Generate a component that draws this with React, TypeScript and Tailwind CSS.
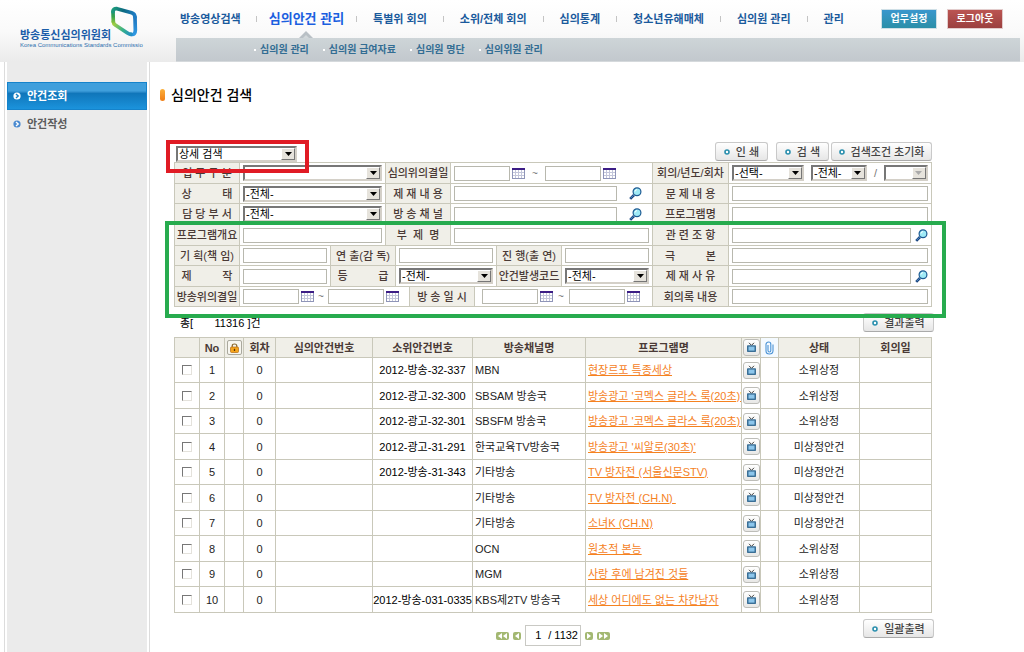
import { useId } from 'react';
import type { ReactNode } from 'react';

type Children = { children?: ReactNode };

function Logo() {
  return (
    <a href="#home" className="flex w-[176px] shrink-0 pl-5 pt-1" aria-label="방송통신심의위원회">
      <span className="flex flex-col pt-[25px] whitespace-nowrap">
        <span className="text-[11px] leading-3 font-bold text-[#1b5da9]">방송통신심의위원회</span>
        <span className="w-0 text-[6px] leading-2 text-[#2b6fae]">Korea Communications Standards Commissio</span>
      </span>
      <svg className="-ml-0.5" width="30" height="35" viewBox="322 10 90 105" fill="none" strokeLinejoin="round" strokeLinecap="round" strokeWidth="11">
        <defs>
          <linearGradient id="lg-top" gradientUnits="userSpaceOnUse" x1="335" x2="400" y1="24" y2="40">
            <stop offset="0" stopColor="#1c9a7c" />
            <stop offset="0.45" stopColor="#0d6a80" />
            <stop offset="1" stopColor="#1f7cc4" />
          </linearGradient>
          <linearGradient id="lg-left" gradientUnits="userSpaceOnUse" x1="335" x2="335" y1="24" y2="72">
            <stop offset="0" stopColor="#178a78" />
            <stop offset="0.5" stopColor="#36a34c" />
            <stop offset="1" stopColor="#a3cd3c" />
          </linearGradient>
          <linearGradient id="lg-bottom" gradientUnits="userSpaceOnUse" x1="335" x2="398" y1="68" y2="100">
            <stop offset="0" stopColor="#a8cf3e" />
            <stop offset="0.5" stopColor="#35b08c" />
            <stop offset="1" stopColor="#1f86d2" />
          </linearGradient>
          <linearGradient id="lg-right" gradientUnits="userSpaceOnUse" x1="400" x2="400" y1="42" y2="100">
            <stop offset="0" stopColor="#1b6fb8" />
            <stop offset="1" stopColor="#2f98e2" />
          </linearGradient>
        </defs>
        <path d="M400 50L401 88Q401 104 388 101" stroke="url(#lg-right)" />
        <path d="M388 101Q382 100 376 96L342 74Q335 69 335 63" stroke="url(#lg-bottom)" />
        <path d="M335 64L334 33" stroke="url(#lg-left)" />
        <path d="M334 33Q334 23 346 24L390 36Q400 39 400 50" stroke="url(#lg-top)" />
      </svg>
    </a>
  );
}

const NAV = ['방송영상검색', '심의안건 관리', '특별위 회의', '소위/전체 회의', '심의통계', '청소년유해매체', '심의원 관리', '관리'];
const SUBNAV = ['심의원 관리', '심의원 급여자료', '심의원 명단', '심의위원 관리'];

function Header() {
  return (
    <header className="flex h-[62px] bg-linear-to-b from-white via-[#fafafa] to-[#ebebeb] pr-1">
      <Logo />
      <div className="flex min-w-0 flex-1 flex-col">
        <div className="flex h-[38px] items-center justify-between pr-[17px]">
          <nav className="flex h-full items-center pl-1">
            {NAV.map((item, i) => (
              <div key={item} className="flex h-full items-center">
                {i > 0 && <span className="h-1.5 w-px bg-[#c4c4c4]" />}
                <a
                  href={`#nav-${i}`}
                  className={
                    i === 1
                      ? 'relative flex h-full items-center px-3 text-[13px] font-bold whitespace-nowrap text-[#1b5fe0]'
                      : `flex h-full items-center text-[11px] font-bold whitespace-nowrap text-[#1a5a9c] ${i === 0 ? 'pr-[15px]' : 'px-4'}`
                  }
                >
                  {item}
                  {i === 1 && (
                    <svg className="absolute bottom-0 left-1/2 -translate-x-1/2" width="14" height="7" viewBox="0 0 14 7">
                      <path d="M0 7L7 0L14 7Z" fill="#b9c0c5" />
                      <path d="M4 7L7 4L10 7Z" fill="#d2d7da" />
                    </svg>
                  )}
                </a>
              </div>
            ))}
          </nav>
          <div className="flex gap-2.5">
            <button className="h-5 w-14 border border-[#cfdfe6] bg-linear-to-b from-[#3a97cd] to-[#2b8fa8] text-[10px] leading-4 font-bold whitespace-nowrap text-white">업무설정</button>
            <button className="h-5 w-14 border border-[#e2cccc] bg-linear-to-b from-[#bb5552] to-[#9b403f] text-[10px] leading-4 font-bold whitespace-nowrap text-white">로그아웃</button>
          </div>
        </div>
        <nav className="flex h-6 items-center gap-3.5 border-b border-[#d5d9dc] bg-linear-to-b from-[#ced5d8] to-[#c2c8cd] pl-[78px]">
          {SUBNAV.map((item, i) => (
            <a key={item} href={`#sub-${i}`} className="flex items-center gap-1 text-[10px] font-bold whitespace-nowrap text-[#336d93]">
              <span className="size-0.5 bg-white" />
              {item}
            </a>
          ))}
        </nav>
      </div>
    </header>
  );
}

function Bullet({ disc, arrow }: { disc: string; arrow: string }) {
  return (
    <svg width="8" height="8" viewBox="0 0 8 8" className="shrink-0">
      <circle cx="4" cy="4" r="3.6" fill={disc} />
      <path d="M3 2L5.2 4L3 6" fill="none" stroke={arrow} strokeWidth="1.4" />
    </svg>
  );
}

function Sidebar() {
  return (
    <aside className="ml-1 w-[146px] shrink-0 border-x border-[#dcdcdc] bg-white px-0.5">
      <nav className="h-full bg-[#ebebeb] pt-5 text-[11px] font-bold">
        <a href="#list" className="flex h-7 items-center gap-1.5 border border-[#1583cb] bg-linear-to-b from-[#3f9fdc] from-30% via-[#1076ba] via-40% to-[#1b93dc] pl-[5px] text-white">
          <Bullet disc="#ffffff" arrow="#1680c4" />
          안건조회
        </a>
        <a href="#write" className="flex h-7 items-center gap-1.5 pl-1.5 text-[#5b5b5b]">
          <Bullet disc="#4a8ad0" arrow="#ffffff" />
          안건작성
        </a>
      </nav>
    </aside>
  );
}

function PushButton({ children, className = '' }: Children & { className?: string }) {
  return (
    <button className={`flex h-[19px] items-center justify-center gap-1.5 rounded-[3px] border border-[#c9c9c9] border-b-[#aaa] bg-linear-to-b from-white to-[#e6e6e6] text-[11px] leading-4 font-medium whitespace-nowrap text-[#444] ${className}`}>
      <svg width="6" height="6" viewBox="0 0 6 6">
        <circle cx="3" cy="3" r="2" fill="white" stroke="#2a8fae" strokeWidth="1.6" />
      </svg>
      {children}
    </button>
  );
}

function Select({ id, label, value, className = '', disabled }: { id?: string; label?: string; value: string; className?: string; disabled?: boolean }) {
  return (
    <span className={`relative block h-4 ${className}`}>
      <select
        id={id}
        aria-label={label}
        disabled={disabled}
        className="block h-4 w-full appearance-none border-2 border-[#d4d0c8] border-t-[#777] border-l-[#777] bg-white pr-3.5 pl-px text-[11px] leading-3 text-black"
      >
        <option>{value}</option>
      </select>
      <span className="pointer-events-none absolute top-0.5 right-0.5 flex h-3 w-3.5 items-center justify-center border border-white border-r-[#777] border-b-[#777] bg-[#e6e3dc]">
        <svg width="7" height="4" viewBox="0 0 7 4">
          <path d="M0 0H7L3.5 4Z" fill={disabled ? '#aaa' : '#000'} />
        </svg>
      </span>
    </span>
  );
}

function Box({ id, label, className = '' }: { id?: string; label?: string; className?: string }) {
  return <input id={id} aria-label={label} type="text" className={`block h-[15px] min-w-0 border border-[#b8b8ae] bg-white px-1 text-[11px] ${className}`} />;
}

function Calendar() {
  return (
    <button aria-label="달력" className="shrink-0">
      <svg width="13" height="11" viewBox="0 0 13 11" shapeRendering="crispEdges">
        <rect width="13" height="11" fill="#8f95b8" />
        <rect width="13" height="2" fill="#3c1d86" />
        <rect x="1" y="2" width="11" height="8" fill="#fff" />
        <path d="M1 4.5H12M1 7.5H12M3.5 2V10M6.5 2V10M9.5 2V10" stroke="#c3c6da" />
      </svg>
    </button>
  );
}

function Find() {
  return (
    <button aria-label="찾기" className="shrink-0">
      <svg width="13" height="13" viewBox="0 0 13 13">
        <path d="M1.2 11.8L5 8" stroke="#16417c" strokeWidth="2.6" />
        <path d="M1.6 11.2L4.6 8.2" stroke="#5f9fd8" strokeWidth="0.9" />
        <circle cx="8" cy="4.8" r="3.9" fill="#9feaf6" stroke="#1c5a92" strokeWidth="1.2" />
        <path d="M6 4.5Q6.2 2.8 8 2.6" stroke="white" fill="none" />
      </svg>
    </button>
  );
}

function Row({ children }: Children) {
  return <div className="flex h-[21px] border-b border-[#c9c8ba] even:h-5">{children}</div>;
}

function Label({ children, htmlFor, className = 'w-[65px]' }: Children & { htmlFor?: string; className?: string }) {
  return (
    <label htmlFor={htmlFor} className={`flex shrink-0 items-center justify-center border-r border-[#c9c8ba] bg-[#f0efe8] text-[11px] leading-4 font-medium whitespace-pre text-[#4a3a36] ${className}`}>
      {children}
    </label>
  );
}

function Field({ children, className = '' }: Children & { className?: string }) {
  return <div className={`flex items-center border-r border-[#c9c8ba] px-[3px] ${className}`}>{children}</div>;
}

function DateRange({ id, tilde, className = '' }: { id: string; tilde: string; className?: string }) {
  return (
    <div className={`flex items-center ${className}`}>
      <Box id={id} className="w-14" />
      <span className="ml-0.5 flex"><Calendar /></span>
      <span className={`text-center text-[10px] text-[#777] ${tilde}`}>~</span>
      <Box label="종료일" className="w-14" />
      <span className="ml-0.5 flex"><Calendar /></span>
    </div>
  );
}

function SearchForm() {
  const p = useId();
  const id = (n: string) => p + n;
  return (
    <form onSubmit={(e) => e.preventDefault()}>
      <div className="relative flex h-5 items-start justify-between">
        <div className="ml-0.5 pt-1">
          <Select label="검색 유형" value="상세 검색" className="w-[121px]" />
          <span className="pointer-events-none absolute -top-0.5 -left-2 z-10 h-[33px] w-[143px] border-4 border-[#e01b24]" />
        </div>
        <div className="flex">
          <PushButton className="mr-2 w-[53px]">인 쇄</PushButton>
          <PushButton className="mr-0.5 w-[53px]">검 색</PushButton>
          <PushButton className="w-[101px]">검색조건 초기화</PushButton>
        </div>
      </div>
      <div className="border-t border-l border-[#c9c8ba]">
        <Row>
          <Label htmlFor={id('a')}>업 무 구 분</Label>
          <Field className="w-[146px]"><Select id={id('a')} value="" className="w-full" /></Field>
          <Label htmlFor={id('b')}>심의위의결일</Label>
          <Field className="w-[202px]"><DateRange id={id('b')} tilde="w-5" /></Field>
          <Label htmlFor={id('c')} className="w-[76px]">회의/년도/회차</Label>
          <Field className="flex-1 justify-between">
            <Select id={id('c')} value="-선택-" className="w-[72px]" />
            <Select label="년도" value="-전체-" className="w-14" />
            <span className="text-[11px] text-[#777]">/</span>
            <Select label="회차" value="" disabled className="w-11" />
          </Field>
        </Row>
        <Row>
          <Label htmlFor={id('d')}>{'상          태'}</Label>
          <Field className="w-[146px]"><Select id={id('d')} value="-전체-" className="w-full" /></Field>
          <Label htmlFor={id('e')}>제 재 내 용</Label>
          <Field className="w-[202px] gap-3"><Box id={id('e')} className="w-[163px]" /><Find /></Field>
          <Label htmlFor={id('f')} className="w-[76px]">문 제 내 용</Label>
          <Field className="flex-1"><Box id={id('f')} className="w-full" /></Field>
        </Row>
        <Row>
          <Label htmlFor={id('g')}>담 당 부 서</Label>
          <Field className="w-[146px]"><Select id={id('g')} value="-전체-" className="w-full" /></Field>
          <Label htmlFor={id('h')}>방 송 채 널</Label>
          <Field className="w-[202px] gap-3"><Box id={id('h')} className="w-[163px]" /><Find /></Field>
          <Label htmlFor={id('i')} className="w-[76px]">프로그램명</Label>
          <Field className="flex-1"><Box id={id('i')} className="w-full" /></Field>
        </Row>
      </div>
      <div className="relative border-l border-[#c9c8ba]">
        <Row>
          <Label htmlFor={id('j')}>프로그램개요</Label>
          <Field className="w-[146px]"><Box id={id('j')} className="w-full" /></Field>
          <Label htmlFor={id('k')}>부  제  명</Label>
          <Field className="w-[202px]"><Box id={id('k')} className="w-full" /></Field>
          <Label htmlFor={id('l')} className="w-[76px]">관 련 조 항</Label>
          <Field className="flex-1 gap-1"><Box id={id('l')} className="flex-1" /><Find /></Field>
        </Row>
        <Row>
          <Label htmlFor={id('m')}>기 획(책 임)</Label>
          <Field className="w-[91px]"><Box id={id('m')} className="w-full" /></Field>
          <Label htmlFor={id('n')}>연 출(감 독)</Label>
          <Field className="w-[101px]"><Box id={id('n')} className="w-full" /></Field>
          <Label htmlFor={id('o')}>진 행(출 연)</Label>
          <Field className="w-[91px]"><Box id={id('o')} className="w-full" /></Field>
          <Label htmlFor={id('q')} className="w-[76px]">{'극          본'}</Label>
          <Field className="flex-1"><Box id={id('q')} className="w-full" /></Field>
        </Row>
        <Row>
          <Label htmlFor={id('r')}>{'제          작'}</Label>
          <Field className="w-[91px]"><Box id={id('r')} className="w-full" /></Field>
          <Label htmlFor={id('s')}>{'등          급'}</Label>
          <Field className="w-[101px]"><Select id={id('s')} value="-전체-" className="w-full" /></Field>
          <Label htmlFor={id('t')}>안건발생코드</Label>
          <Field className="w-[91px]"><Select id={id('t')} value="-전체-" className="w-full" /></Field>
          <Label htmlFor={id('u')} className="w-[76px]">제 재 사 유</Label>
          <Field className="flex-1 gap-1"><Box id={id('u')} className="flex-1" /><Find /></Field>
        </Row>
        <Row>
          <Label htmlFor={id('v')}>방송위의결일</Label>
          <Field className="w-[170px]"><DateRange id={id('v')} tilde="w-3.5" /></Field>
          <Label htmlFor={id('w')}>방 송 일 시</Label>
          <Field className="w-[178px]"><DateRange id={id('w')} tilde="w-4" className="pl-1" /></Field>
          <Label htmlFor={id('x')} className="w-[76px]">회의록 내용</Label>
          <Field className="flex-1"><Box id={id('x')} className="w-full" /></Field>
        </Row>
        <span className="pointer-events-none absolute -top-1 -right-3.5 -bottom-[11px] -left-2.5 z-10 border-4 border-[#27ab4e]" />
      </div>
    </form>
  );
}

function TvButton() {
  return (
    <button aria-label="영상 보기" className="mx-auto flex size-[17px] items-center justify-center rounded-[3px] border border-[#bdbdb8] bg-linear-to-b from-white to-[#e8e8e6]">
      <svg width="11" height="11" viewBox="0 0 11 11">
        <path d="M3 0.8L5.5 3.4L8 0.8" stroke="#444" fill="none" />
        <rect x="1" y="3.2" width="9" height="6.8" rx="0.8" fill="#3a6f96" />
        <rect x="2.5" y="4.6" width="6" height="4" fill="#8cc6ec" />
      </svg>
    </button>
  );
}

const ROWS = [
  ['2012-방송-32-337', 'MBN', '현장르포 특종세상', '소위상정'],
  ['2012-광고-32-300', 'SBSAM 방송국', "방송광고 '코멕스 글라스 룩(20초)'", '소위상정'],
  ['2012-광고-32-301', 'SBSFM 방송국', "방송광고 '코멕스 글라스 룩(20초)'", '소위상정'],
  ['2012-광고-31-291', '한국교육TV방송국', "방송광고 '씨알로(30초)'", '미상정안건'],
  ['2012-방송-31-343', '기타방송', 'TV 방자전 (서울신문STV)', '미상정안건'],
  ['', '기타방송', 'TV 방자전 (CH.N) ', '미상정안건'],
  ['', '기타방송', '소녀K (CH.N)', '미상정안건'],
  ['', 'OCN', '원초적 본능', '소위상정'],
  ['', 'MGM', '사랑 후에 남겨진 것들', '소위상정'],
  ['2012-방송-031-0335', 'KBS제2TV 방송국', '세상 어디에도 없는 차칸남자', '소위상정'],
];

const TH = 'border border-[#c9c8ba] p-0 font-bold';
const TD = 'border border-[#c9c8ba] p-0 text-center';

function Results() {
  return (
    <table className="w-full table-fixed border-collapse text-[11px] leading-4 whitespace-nowrap text-[#222]">
      <colgroup>
        <col className="w-[25px]" />
        <col className="w-[25px]" />
        <col className="w-[19px]" />
        <col className="w-8" />
        <col className="w-[97px]" />
        <col className="w-[100px]" />
        <col className="w-[113px]" />
        <col />
        <col className="w-[19px]" />
        <col className="w-[18px]" />
        <col className="w-[81px]" />
        <col className="w-[72px]" />
      </colgroup>
      <thead>
        <tr className="h-5 bg-[#f0efe8] text-[#4a3a36]">
          <th className={TH} />
          <th className={TH}>No</th>
          <th className={TH}>
            <span className="mx-auto flex size-[15px] items-center justify-center rounded-xs border border-[#aaa99e] bg-[#f7f6f0]">
              <svg width="9" height="10" viewBox="0 0 9 10">
                <path d="M2.2 5V3Q2.2 1 4.5 1T6.8 3V5" fill="none" stroke="#8a6a30" strokeWidth="1.2" />
                <rect x="0.5" y="4" width="8" height="5.5" rx="1" fill="#f5a51c" stroke="#b46a12" strokeWidth="0.7" />
                <path d="M4.5 5.8V8" stroke="#5c3305" strokeWidth="1.3" />
              </svg>
            </span>
          </th>
          <th className={TH}>회차</th>
          <th className={TH}>심의안건번호</th>
          <th className={TH}>소위안건번호</th>
          <th className={TH}>방송채널명</th>
          <th className={TH}>프로그램명</th>
          <th className={TH}><TvButton /></th>
          <th className={`${TH} bg-[#f4faff]`}>
            <svg className="mx-auto" width="9" height="14" viewBox="0 0 9 14" fill="none" stroke="#4a93d6" strokeWidth="1.1">
              <path d="M3 4V9.5Q3 11 4.4 11T5.8 9.5V3Q5.8 1 3.6 1T1 3.2V10Q1 13 4.4 13T8 10V3.5" />
            </svg>
          </th>
          <th className={TH}>상태</th>
          <th className={TH}>회의일</th>
        </tr>
      </thead>
      <tbody>
        {ROWS.map(([no, channel, title, state], i) => (
          <tr key={i} className="h-[25px] even:h-[26px]">
            <td className={TD}>
              <input type="checkbox" aria-label={`${i + 1}번 선택`} className="mx-auto block size-2.5 appearance-none border border-[#e4e2dc] border-t-[#777] border-l-[#777] bg-white" />
            </td>
            <td className={TD}>{i + 1}</td>
            <td className={TD} />
            <td className={TD}>0</td>
            <td className={TD} />
            <td className={`${TD} text-black`}>{no}</td>
            <td className="border border-[#c9c8ba] p-0 pl-0.5">{channel}</td>
            <td className="overflow-hidden border border-[#c9c8ba] p-0 pl-0.5">
              <a href={`#item-${i + 1}`} className="whitespace-pre text-[#f5821f] underline">{title}</a>
            </td>
            <td className={TD}><TvButton /></td>
            <td className={TD} />
            <td className={TD}>{state}</td>
            <td className={TD} />
          </tr>
        ))}
      </tbody>
    </table>
  );
}

function PageArrow({ label, double, back }: { label: string; double?: boolean; back?: boolean }) {
  return (
    <button aria-label={label} className="flex h-2 items-center gap-px rounded-xs bg-[#a3b872] px-0.5">
      {(double ? [0, 1] : [0]).map((n) => (
        <svg key={n} width="4" height="6" viewBox="0 0 4 6">
          <path d={back ? 'M4 0V6L0 3Z' : 'M0 0V6L4 3Z'} fill="white" />
        </svg>
      ))}
    </button>
  );
}

export default function App() {
  return (
    <div className="flex min-h-screen flex-col bg-white font-['Liberation_Sans','Noto_Sans_CJK_KR',sans-serif]">
      <Header />
      <div className="flex flex-1">
        <Sidebar />
        <main className="min-w-0 flex-1 pt-[22px] pl-2.5">
          <h1 className="flex h-[22px] items-center gap-1.5 text-[14px] font-medium text-black">
            <span className="h-3 w-[5px] rounded-full bg-linear-to-b from-[#fbb03a] to-[#f07c12]" />
            심의안건 검색
          </h1>
          <div className="mt-9 mr-3 ml-3.5 max-w-[758px]">
            <SearchForm />
            <div className="flex h-[30px] items-start justify-between pt-1.5 pl-1.5">
              <p className="pt-0.5 text-[11px] leading-4 whitespace-pre text-black">{'총[       11316 ]건'}</p>
              <PushButton className="-mr-0.5 w-[71px]">결과출력</PushButton>
            </div>
            <Results />
            <div className="grid grid-cols-[1fr_auto_1fr] items-start pt-1.5">
              <div className="col-start-2 flex items-center gap-1 pt-1.5">
                <PageArrow label="처음" double back />
                <PageArrow label="이전" back />
                <span className="flex h-[21px] w-14 items-center justify-end border border-[#c9c9c4] pr-0.5 text-[11px] whitespace-nowrap">
                  <input aria-label="페이지" defaultValue="1" className="w-5 min-w-0 text-center" />
                  <span>/ 1132</span>
                </span>
                <PageArrow label="다음" />
                <PageArrow label="마지막" double />
              </div>
              <PushButton className="-mr-0.5 w-[71px] justify-self-end">일괄출력</PushButton>
            </div>
          </div>
        </main>
      </div>
    </div>
  );
}
